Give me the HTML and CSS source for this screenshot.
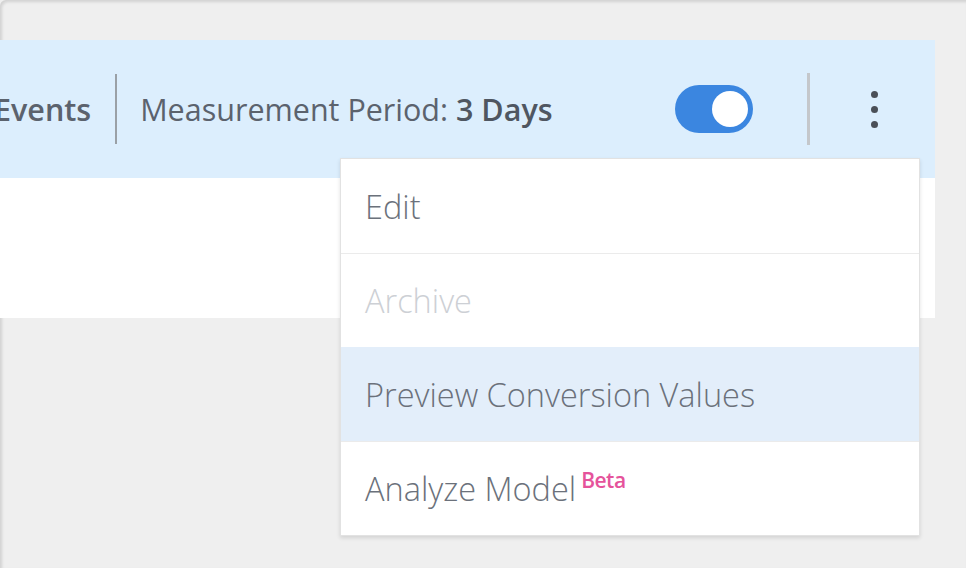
FILE: index.html
```html
<!DOCTYPE html>
<html>
<head>
<meta charset="utf-8">
<link rel="stylesheet" href="styles.css">
</head>
<body>
<div class="frame">
  <div class="card">
    <div class="header">
      <span class="events">Events</span>
      <span class="vdiv"></span>
      <span class="period">Measurement Period: <b>3 Days</b></span>
      <span class="spacer"></span>
      <span class="toggle"><span class="knob"></span></span>
      <span class="vdiv vdiv-right"></span>
      <span class="kebab"><i></i><i></i><i></i></span>
    </div>
    <div class="body"></div>
  </div>
  <div class="menu">
    <div class="item">Edit</div>
    <div class="item disabled">Archive</div>
    <div class="item active">Preview Conversion Values</div>
    <div class="item">Analyze Model<sup class="beta">Beta</sup></div>
  </div>
</div>
</body>
</html>
```
FILE: styles.css
```css
html, body {
  margin: 0;
  padding: 0;
  height: 100%;
}
body {
  background: #efefef;
  font-family: "Open Sans", "Noto Sans", sans-serif;
  overflow: hidden;
}
.frame {
  position: relative;
  height: 568px;
  padding-top: 40px;
  box-sizing: border-box;
  box-shadow: inset 2px 2px 3px rgba(0,0,0,0.12);
  border-top-left-radius: 6px;
}
.card {
  width: 935px;
}
.header {
  height: 138px;
  background: #dceefd;
  display: flex;
  align-items: center;
  color: #5b626d;
  font-size: 30.5px;
  white-space: nowrap;
}
.events {
  font-weight: 600;
  margin-left: -6px;
}
.vdiv {
  width: 2px;
  height: 70px;
  background: #9aa0a6;
  margin: 0 23px 0 24px;
}
.period b {
  font-weight: 600;
  color: #4f5661;
}
.spacer { flex: 1; }
.toggle {
  width: 78px;
  height: 48px;
  border-radius: 24px;
  background: #3b86e0;
  display: flex;
  align-items: center;
  justify-content: flex-end;
  padding-right: 5px;
  box-sizing: border-box;
}
.knob {
  width: 36px;
  height: 36px;
  border-radius: 50%;
  background: #fff;
}
.vdiv-right {
  background: #c4c7cb;
  height: 72px;
  margin: 0 0 0 54px;
  width: 3px;
}
.kebab {
  display: flex;
  flex-direction: column;
  gap: 8px;
  margin-left: 61px;
  margin-right: 57px;
}
.kebab i {
  width: 7px;
  height: 7px;
  border-radius: 50%;
  background: #4a4f57;
}
.body {
  height: 140px;
  background: #fff;
}
.menu {
  position: absolute;
  left: 340px;
  top: 158px;
  width: 580px;
  background: #fff;
  border: 1px solid #e2e2e2;
  box-shadow: 0 2px 4px rgba(0,0,0,0.12);
  box-sizing: border-box;
}
.item {
  height: 94px;
  display: flex;
  align-items: center;
  padding-left: 24px;
  font-size: 32.5px;
  font-weight: 300;
  color: #6b717b;
  border-top: 1px solid #ebebeb;
  box-sizing: border-box;
}
.item:first-child { border-top: none; }
.item.disabled { color: #cdd0d5; }
.item.active { background: #e3eefa; border-top-color: #e3eefa; }
.beta {
  color: #e5539b;
  font-size: 21px;
  font-weight: 600;
  letter-spacing: -0.5px;
  align-self: flex-start;
  margin-top: 24px;
  margin-left: 5px;
}
```
